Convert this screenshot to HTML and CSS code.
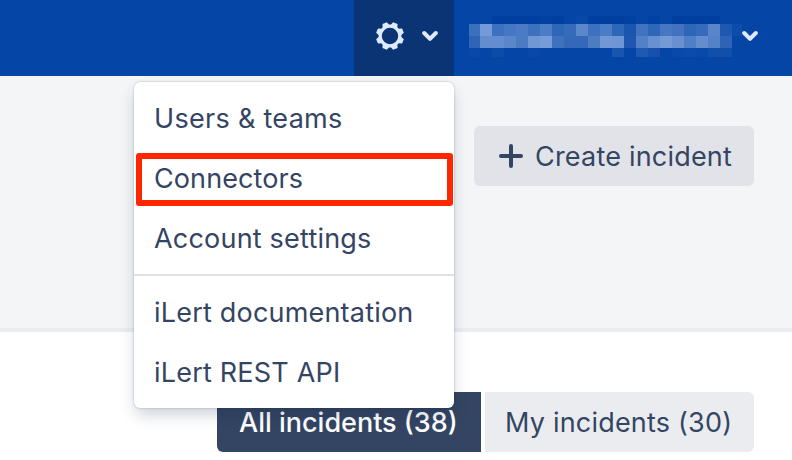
FILE: index.html
```html
<!DOCTYPE html>
<html lang="en">
<head>
<meta charset="utf-8">
<title>Incidents</title>
<link rel="stylesheet" href="styles.css">
</head>
<body>
<header class="topbar">
  <div class="settings">
    <svg class="gear" width="28" height="28" viewBox="-14 -14 28 28"><circle r="9.8" fill="none" stroke="#dfeaff" stroke-width="3.2"/><g class="teeth"><path id="t" d="M-3.6-10.5 -2.4-14H2.4L3.6-10.5z" transform="rotate(22.5)"/><use href="#t" transform="rotate(45)"/><use href="#t" transform="rotate(90)"/><use href="#t" transform="rotate(135)"/><use href="#t" transform="rotate(180)"/><use href="#t" transform="rotate(225)"/><use href="#t" transform="rotate(270)"/><use href="#t" transform="rotate(315)"/></g></svg>
    <svg class="chevron" width="16" height="12" viewBox="0 0 16 12"><path d="M2.2 3 8 8.9 13.8 3"/></svg>
  </div>
  <div class="account">
    <svg class="masked" width="273" height="41" shape-rendering="crispEdges"></svg>
    <svg class="chevron" width="16" height="12" viewBox="0 0 16 12"><path d="M2.2 3 8 8.9 13.8 3"/></svg>
  </div>
</header>
<section class="heading">
  <button class="create"><svg width="24" height="24" viewBox="0 0 24 24"><path d="M12 2V22M2 12H22"/></svg><span class="create-label">Create incident</span></button>
</section>
<main class="tabs">
  <button class="tab active"><span>All incidents (38)</span></button>
  <button class="tab"><span>My incidents (30)</span></button>
</main>
<nav class="menu">
  <a class="item"><span class="users">Users &amp; teams</span></a>
  <a class="item marked"><span class="connectors">Connectors</span></a>
  <a class="item"><span>Account settings</span></a>
  <hr>
  <a class="item"><span>iLert documentation</span></a>
  <a class="item"><span>iLert REST API</span></a>
</nav>
<script src="mask.js"></script>
</body>
</html>
```
FILE: mask.js
```js
// Pixelated account name: one row of cells per entry.
const rows = [
  [0, 8, "0545a5 0545a5 003f9f 003f9f 003f9f 003f9f 0041a2 003f9f 0545a5 0748a8 003f9f 003f9f 003f9f 0041a2 0545a5 0041a2 0545a5 003f9f 003f9f 003f9f 003f9f 0545a5 0545a5"],
  [8, 12, "3c70bd 759ad8 3d70bf 4577c3 4b7cc3 3d70bd 4b7cc6 2f67b8 366bbb 5b88cb 3d70bf 4b7cc6 2f67b8 1b55ad 4272c0 2f67b8 4577c3 4272c0 2f67b8 366bbb 5986cb 1f58b0 0d4ca9"],
  [20, 12, "3163b7 638dce 638dce 5b87ca 4b7cc3 7198d5 759bd8 4071bd 3568b8 3568b8 4d7cc3 7198d5 6f96d4 2055b0 5380c6 6990d1 759ad5 6990d1 4f7fc6 638dce 5582c6 2f63b5 0545a5"],
  [32, 9, "0948a7 0545a5 0c4ba8 0545a5 0545a5 0948a7 0545a5 0545a5 0545a5 0545a5 0545a5 0545a5 1954ae 0545a5 1f5ab2 1750ad 0545a5 0949a7 0c4ba8 0949a7 124fab 124fab 0545a5"]
];
const svg = document.querySelector(".masked");
for (const [y, h, colors] of rows) {
  colors.split(" ").forEach((c, i) => {
    const r = document.createElementNS("http://www.w3.org/2000/svg", "rect");
    r.setAttribute("x", i ? i * 12 - 1 : 0);
    r.setAttribute("y", y);
    r.setAttribute("width", i ? 12 : 11);
    r.setAttribute("height", h);
    r.setAttribute("fill", "#" + c);
    svg.append(r);
  });
}
```
FILE: styles.css
```css
* { box-sizing: border-box; }
body { margin: 0; width: 792px; height: 460px; overflow: hidden; background: #fff; color: #344563; font: 27px/32px Inter, sans-serif; letter-spacing: .2px; }
button { border: 0; padding: 0; font: inherit; color: inherit; letter-spacing: inherit; }
svg { display: block; flex: none; }
.topbar { height: 76px; background: #0545a5; display: flex; justify-content: flex-end; }
.settings { width: 100px; background: #0a3474; display: flex; align-items: center; padding: 0 16px 4px 22px; justify-content: space-between; }
.account { width: 338px; display: flex; padding: 16px 0 0 15px; }
.account .chevron { margin: 14px 0 0; }
.chevron path { fill: none; stroke: #dfeaff; stroke-width: 4; stroke-linecap: round; stroke-linejoin: round; }
.teeth { fill: #dfeaff; }
.heading { height: 256px; background: #f4f5f7; border-bottom: 4px solid #ebecf0; display: flex; justify-content: flex-end; padding: 50px 38px 0 0; }
.create { width: 280px; height: 60px; border-radius: 6px; background: #e2e3e9; display: flex; align-items: center; padding-left: 25px; gap: 12px; }
.create-label { padding-top: 2px; }
.create path { stroke: #344563; stroke-width: 4; stroke-linecap: round; }
.tabs { display: flex; justify-content: flex-end; gap: 4px; padding: 60px 38px 0 0; }
.tab { width: 269px; height: 60px; background: #ebecf0; border-radius: 0 6px 6px 0; display: flex; align-items: center; padding: 1px 0 0 20px; }
.active { width: 264px; background: #344563; color: #fff; border-radius: 6px 0 0 6px; padding-left: 22px; font-weight: 500; letter-spacing: 0; }
.menu { position: absolute; left: 134px; top: 82px; width: 320px; height: 326px; padding: 6px 0; background: #fff; border-radius: 6px; box-shadow: 0 8px 16px -2px rgba(9,30,66,.22), 0 0 2px rgba(9,30,66,.3); }
.item { height: 60px; display: flex; align-items: center; padding: 2px 0 0 20px; position: relative; }
.menu hr { margin: 6px 0; border: 0; height: 2px; background: #dfe1e6; }
.users { letter-spacing: .3px; }
.connectors { letter-spacing: .1px; }
.marked::after { content: ""; position: absolute; box-sizing: border-box; left: 2px; top: 5px; width: 317px; height: 53px; border: 6px solid #ff2600; border-radius: 3px; }
span { white-space: nowrap; }
```
